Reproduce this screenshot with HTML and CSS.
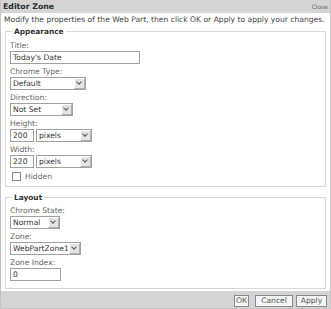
FILE: index.html
```html
<!DOCTYPE html>
<html>
<head>
<meta charset="utf-8">
<link rel="stylesheet" href="styles.css">
</head>
<body>
<div class="zone">
  <div class="header"><span class="title">Editor Zone</span><span class="close">Close</span></div>
  <div class="body">
    <p class="desc">Modify the properties of the Web Part, then click OK or Apply to apply your changes.</p>
    <fieldset class="group first">
      <legend>Appearance</legend>
      <div class="field">
        <div class="label">Title:</div>
        <div class="input w-title">Today's Date</div>
      </div>
      <div class="field">
        <div class="label">Chrome Type:</div>
        <div class="select w-chrome"><span class="val">Default</span><span class="arrow"></span></div>
      </div>
      <div class="field">
        <div class="label">Direction:</div>
        <div class="select w-dir"><span class="val">Not Set</span><span class="arrow"></span></div>
      </div>
      <div class="field">
        <div class="label">Height:</div>
        <div class="row">
          <div class="input w-num">200</div>
          <div class="select w-unit"><span class="val">pixels</span><span class="arrow"></span></div>
        </div>
      </div>
      <div class="field">
        <div class="label">Width:</div>
        <div class="row">
          <div class="input w-num">220</div>
          <div class="select w-unit"><span class="val">pixels</span><span class="arrow"></span></div>
        </div>
      </div>
      <div class="check"><span class="box"></span><span>Hidden</span></div>
    </fieldset>
    <fieldset class="group second">
      <legend>Layout</legend>
      <div class="field">
        <div class="label">Chrome State:</div>
        <div class="select w-state"><span class="val">Normal</span><span class="arrow"></span></div>
      </div>
      <div class="field">
        <div class="label">Zone:</div>
        <div class="select w-zone"><span class="val">WebPartZone1</span><span class="arrow"></span></div>
      </div>
      <div class="field">
        <div class="label">Zone Index:</div>
        <div class="input w-index">0</div>
      </div>
    </fieldset>
  </div>
  <div class="footer">
    <span class="btn btn-ok">OK</span>
    <span class="btn btn-cancel">Cancel</span>
    <span class="btn btn-apply">Apply</span>
  </div>
</div>
</body>
</html>
```

FILE: styles.css
```css
html, body {
  margin: 0;
  padding: 0;
  background: #ffffff;
}
.zone {
  width: 331px;
  height: 309px;
  overflow: hidden;
  font-family: "DejaVu Sans", Verdana, sans-serif;
  font-size: 7.6px;
  color: #555;
  box-sizing: border-box;
  border: 1px solid #c4c4c4;
  border-top: 0;
}
.header {
  height: 13px;
  background: #d4d4d4;
  display: flex;
  align-items: center;
  justify-content: space-between;
  padding: 0 2px 0 2px;
}
.title {
  font-weight: bold;
  font-size: 7.8px;
  color: #2e2e2e;
}
.close {
  font-size: 6px;
  color: #666;
}
.body {
  padding: 0 4px;
}
.desc {
  margin: 1px 0 0 -1px;
  line-height: 12px;
  white-space: nowrap;
  color: #444;
}
.group {
  margin: 0;
  padding: 3px 4px 5px 4px;
  border: 1px solid #d8d8d8;
  min-width: 0;
}
.group.second {
  margin-top: 5px;
  padding-top: 2px;
}
legend {
  font-weight: bold;
  font-size: 7.4px;
  color: #333;
  padding: 0 2px;
  margin-left: 2px;
  line-height: 11px;
}
.field {
  display: flex;
  flex-direction: column;
  align-items: flex-start;
  margin-bottom: 2px;
}
.label {
  line-height: 11px;
  color: #666;
}
.row {
  display: flex;
  gap: 2px;
}
.input, .select {
  box-sizing: border-box;
  height: 13px;
  border: 1px solid #a0a0a0;
  background: #fff;
  line-height: 11px;
  padding: 0 2px;
  color: #333;
  white-space: nowrap;
}
.select {
  display: flex;
  justify-content: space-between;
  align-items: stretch;
  padding: 0 0 0 2px;
}
.arrow {
  width: 11px;
  box-sizing: border-box;
  background: #e4e4e4;
  border: 1px solid #fff;
  border-right-color: #b0b0b0;
  border-bottom-color: #b0b0b0;
  position: relative;
}
.arrow::after {
  content: "";
  position: absolute;
  left: 2px;
  top: 1px;
  width: 3px;
  height: 3px;
  border-right: 1px solid #555;
  border-bottom: 1px solid #555;
  transform: rotate(45deg);
}
.w-title { width: 130px; }
.w-chrome { width: 76px; }
.w-dir { width: 63px; }
.w-num { width: 24px; }
.w-unit { width: 56px; }
.w-state { width: 50px; }
.w-zone { width: 71px; }
.w-index { width: 51px; }
.check {
  display: flex;
  align-items: center;
  gap: 4px;
  margin: 4px 0 0 2px;
  height: 9px;
  color: #666;
}
.box {
  width: 7px;
  height: 7px;
  border: 1px solid #888;
  background: #fff;
}
.footer {
  margin-top: 2px;
  height: 21px;
  background: #d4d4d4;
  display: flex;
  justify-content: flex-end;
  align-items: flex-start;
  padding: 4px 3px 0 0;
  box-sizing: border-box;
}
.btn {
  box-sizing: border-box;
  height: 12px;
  border: 1px solid #888;
  background: #f6f6f6;
  padding: 0 3px;
  line-height: 10px;
  color: #555;
}
.btn-ok { padding: 0 1px; }
.btn-cancel { margin-left: 6px; width: 38px; text-align: center; }
.btn-apply { margin-left: 3px; width: 31px; text-align: center; }
```
